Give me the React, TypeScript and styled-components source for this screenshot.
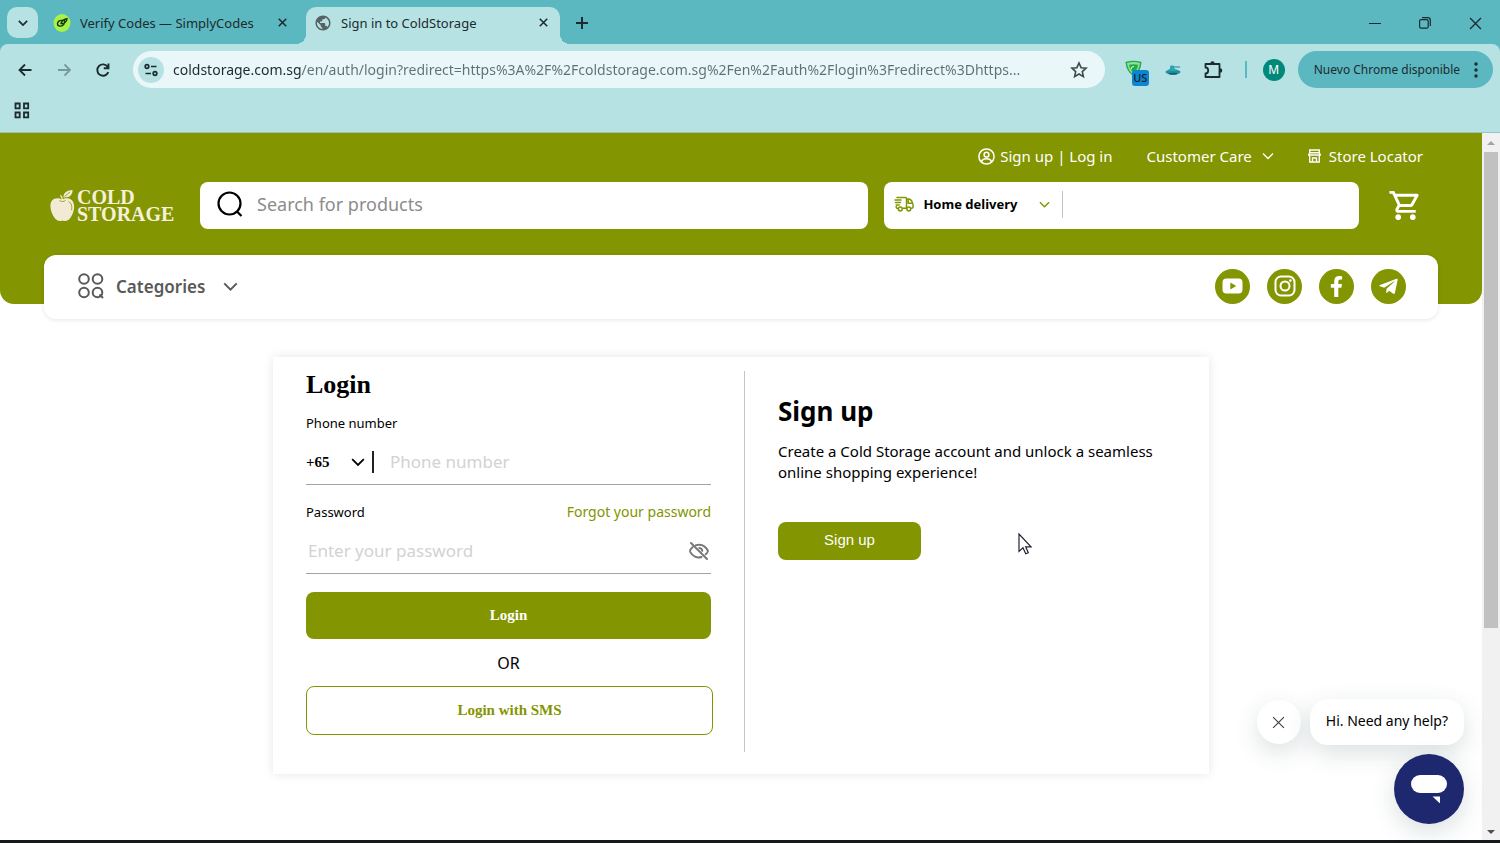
import React from "react";
import styled, { createGlobalStyle, css } from "styled-components";
import { MdOutlineShoppingCart, MdPublic } from "react-icons/md";
import { FaFacebookF, FaTelegramPlane } from "react-icons/fa";

const olive = "#839500";
const teal = "#5bb7c0";
const paleTeal = "#b7e2e4";
const ink = "#1b2b2e";
const sans = `"Noto Sans", sans-serif`;
const serif = `"Liberation Serif", serif`;

const GlobalStyle = createGlobalStyle`
  *, *::before, *::after { box-sizing: border-box; }
  body { margin: 0; background: #fff; font-family: ${sans}; color: #000; }
  button, input, select { font: inherit; color: inherit; margin: 0; padding: 0; border: 0; background: none; outline: 0; }
  button { cursor: pointer; display: flex; align-items: center; justify-content: center; }
  select { appearance: none; }
  a { color: inherit; text-decoration: none; }
  h1, h2, p { margin: 0; }
  svg { display: block; flex: none; }
`;

const Window = styled.div`
  min-height: 100vh;
  display: flex;
  flex-direction: column;
`;

/* ---------- browser frame ---------- */

const TabStrip = styled.div`
  display: flex;
  height: 44px;
  padding: 7px 12px 0 7px;
  background: ${teal};
  color: ${ink};
`;

const TabSearch = styled.button`
  width: 31px;
  height: 31px;
  border-radius: 10px;
  background: ${paleTeal};
`;

const Tab = styled.div<{ $active?: boolean }>`
  position: relative;
  display: flex;
  align-items: center;
  gap: 9px;
  width: ${(p) => (p.$active ? 254 : 253)}px;
  height: 37px;
  margin-left: ${(p) => (p.$active ? 0 : 15)}px;
  padding: ${(p) => (p.$active ? "0 9px 6px 8px" : "0 16px 6px 0")};
  font-size: 13px;
  ${(p) =>
    p.$active &&
    css`
      background: ${paleTeal};
      border-radius: 10px 10px 0 0;
      &::before,
      &::after {
        content: "";
        position: absolute;
        bottom: 0;
        width: 10px;
        height: 10px;
      }
      &::before {
        right: 100%;
        background: radial-gradient(circle at 0 0, transparent 10px, ${paleTeal} 10px);
      }
      &::after {
        left: 100%;
        background: radial-gradient(circle at 100% 0, transparent 10px, ${paleTeal} 10px);
      }
    `}
`;

const TabTitle = styled.span`
  flex: 1;
  white-space: nowrap;
`;

const IconButton = styled.button<{ $size?: number }>`
  width: ${(p) => p.$size ?? 16}px;
  height: ${(p) => p.$size ?? 16}px;
`;

const NewTab = styled(IconButton)`
  margin: 8px 0 0 14px;
`;

const WindowControls = styled.div`
  display: flex;
  gap: 34px;
  margin: 8px 5px 0 auto;
`;

const ToolbarBack = styled.div`
  background: ${teal};
`;

const Toolbar = styled.div`
  background: ${paleTeal};
  border-radius: 8px 8px 0 0;
  border-bottom: 1px solid #9cc3c0;
  color: ${ink};
`;

const AddressRow = styled.div`
  display: flex;
  align-items: center;
  padding: 7px 7px 0 15px;
`;

const NavButtons = styled.div`
  display: flex;
  gap: 19px;
`;

const AddressBar = styled.div`
  flex: 1;
  display: flex;
  align-items: center;
  height: 37px;
  margin-left: 20px;
  padding: 0 16px 0 5px;
  border-radius: 19px;
  background: #eaf7f8;
`;

const SiteInfo = styled.button`
  width: 26px;
  height: 26px;
  border-radius: 50%;
  background: ${paleTeal};
`;

const Url = styled.input`
  flex: 1;
  min-width: 0;
  height: 24px;
  margin: 0 16px 0 9px;
  font-size: 14px;
  text-overflow: ellipsis;
  background: linear-gradient(90deg, ${ink} 129px, #5d7073 129px);
  background-clip: text;
  -webkit-text-fill-color: transparent;
`;

const Extensions = styled.div`
  display: flex;
  align-items: center;
  gap: 16px;
  margin: 0 13px 0 20px;
`;

const FlagExtension = styled.button`
  position: relative;
  align-items: flex-start;
  justify-content: flex-start;
  width: 24px;
  height: 20px;
`;

const CountryBadge = styled.span`
  position: absolute;
  right: 0;
  bottom: -6px;
  width: 17px;
  height: 16px;
  border-radius: 3px;
  background: #0d86cf;
  color: #10202c;
  font-size: 11px;
  font-weight: 500;
  line-height: 16px;
  text-align: center;
`;

const Separator = styled.span`
  width: 2px;
  height: 17px;
  background: ${teal};
`;

const Avatar = styled.button`
  width: 22px;
  height: 22px;
  border-radius: 50%;
  background: #00897b;
  color: #fff;
  font-size: 12px;
`;

const UpdateButton = styled.button`
  gap: 14px;
  height: 37px;
  padding: 0 15px 0 16px;
  border-radius: 19px;
  background: ${teal};
  font-size: 12px;
  white-space: nowrap;
`;

const BookmarkRow = styled.div`
  display: flex;
  align-items: center;
  height: 44px;
  padding-left: 14px;
`;

/* ---------- page ---------- */

const Viewport = styled.div`
  flex: 1;
  display: flex;
  border-bottom: 3px solid #16191a;
`;

const Page = styled.div`
  position: relative;
  flex: 1;
  min-width: 0;
`;

const ScrollTrack = styled.div`
  display: flex;
  flex-direction: column;
  align-items: center;
  width: 18px;
  padding: 7px 0 5px;
  background: #f1f1f1;
`;

const ScrollRail = styled.div`
  flex: 1;
  width: 14px;
  margin: 6px 0;
`;

const ScrollThumb = styled.div`
  height: 71%;
  background: #c1c1c1;
`;

const Header = styled.header`
  padding: 11px 59px 75px 50px;
  border-radius: 0 0 14px 14px;
  background: ${olive};
`;

const TopLinks = styled.nav`
  display: flex;
  justify-content: flex-end;
  align-items: center;
  gap: 34px;
  height: 24px;
  color: #fff;
  font-size: 15px;
`;

const TopLink = styled.a<{ $gap?: number }>`
  display: flex;
  align-items: center;
  gap: ${(p) => p.$gap ?? 8}px;
`;

const SearchRow = styled.div`
  display: flex;
  align-items: center;
  height: 47px;
  margin-top: 14px;
`;

const Logo = styled.a`
  display: flex;
  align-items: center;
  gap: 2px;
  width: 129px;
  color: #f6efdc;
  font-family: ${serif};
  font-size: 20px;
  font-weight: 700;
  line-height: 17px;
`;

const LogoName = styled.span`
  display: flex;
  flex-direction: column;
`;

const SearchBox = styled.label`
  flex: 7;
  display: flex;
  align-items: center;
  gap: 13px;
  height: 47px;
  margin-left: 21px;
  padding: 0 16px 3px;
  border-radius: 8px;
  background: #fff;
`;

const SearchInput = styled.input`
  flex: 1;
  min-width: 0;
  height: 30px;
  font-size: 18px;
  &::placeholder {
    color: #8c8c8c;
  }
`;

const DeliveryBox = styled.div`
  flex: 5;
  display: flex;
  align-items: center;
  height: 47px;
  margin: 0 29px 0 16px;
  padding: 0 10px 3px;
  border-radius: 8px;
  background: #fff;
`;

const DeliverySelect = styled.select`
  width: 116px;
  margin-left: 9px;
  font-size: 13px;
  font-weight: 700;
`;

const DeliveryDivider = styled.span`
  width: 1px;
  height: 27px;
  margin-left: 12px;
  background: #c4c4c4;
`;

const CategoryBar = styled.nav`
  display: flex;
  align-items: center;
  height: 64px;
  margin: -49px 44px 0;
  padding: 0 32px 2px 34px;
  border-radius: 12px;
  background: #fff;
  box-shadow: 0 1px 4px rgba(0, 0, 0, 0.1);
`;

const CategoryButton = styled.button`
  gap: 12px;
  color: #595959;
  font-size: 17px;
  font-weight: 600;
`;

const CategoryLabel = styled.span`
  margin-right: 6px;
`;

const Socials = styled.div`
  display: flex;
  gap: 17px;
  margin-left: auto;
`;

const SocialLink = styled.a`
  display: flex;
  align-items: center;
  justify-content: center;
  width: 35px;
  height: 35px;
  border-radius: 50%;
  background: ${olive};
  color: #fff;
`;

const AuthCard = styled.main`
  display: grid;
  grid-template-columns: 59fr 58fr;
  max-width: 936px;
  margin: 38px auto 0;
  padding: 14px 0 22px;
  background: #fff;
  box-shadow: 0 0 10px rgba(0, 0, 0, 0.1);
`;

const LoginForm = styled.form`
  display: flex;
  flex-direction: column;
  padding: 0 33px 17px;
  border-right: 1px solid #c4c4c4;
`;

const LoginTitle = styled.h1`
  font-family: ${serif};
  font-size: 26px;
  line-height: 28px;
`;

const LabelRow = styled.div`
  display: flex;
  justify-content: space-between;
  margin-top: 14px;
  font-size: 13px;
  line-height: 20px;
`;

const ForgotLink = styled.a`
  color: ${olive};
  font-size: 14px;
`;

const FieldRow = styled.div`
  display: flex;
  align-items: center;
  height: 52px;
  margin-bottom: 3px;
  padding-top: 6px;
  border-bottom: 1px solid #a3a3a3;
`;

const CodeSelect = styled.select`
  width: 45px;
  font-family: ${serif};
  font-size: 15px;
  font-weight: 700;
`;

const CodeDivider = styled.span`
  width: 2px;
  height: 22px;
  margin: 0 16px 0 7px;
  background: #222;
`;

const FieldInput = styled.input`
  flex: 1;
  min-width: 0;
  height: 28px;
  font-size: 17px;
  &::placeholder {
    color: #d2d2d2;
  }
`;

const PasswordInput = styled(FieldInput)`
  padding-left: 2px;
`;

const FormButton = styled.button<{ $outline?: boolean }>`
  height: ${(p) => (p.$outline ? 49 : 47)}px;
  border-radius: 8px;
  background: ${(p) => (p.$outline ? "#fff" : olive)};
  color: ${(p) => (p.$outline ? olive : "#fff")};
  border: ${(p) => (p.$outline ? `1px solid ${olive}` : "0")};
  margin-top: ${(p) => (p.$outline ? 0 : 15)}px;
  margin-right: ${(p) => (p.$outline ? -2 : 0)}px;
  font-family: ${serif};
  font-size: 15px;
  font-weight: 700;
`;

const OrText = styled.p`
  margin: 12px 0 11px;
  font-size: 16px;
  line-height: 24px;
  text-align: center;
`;

const SignupPane = styled.section`
  padding: 22px 33px 0;
`;

const SignupTitle = styled.h2`
  font-size: 26px;
  line-height: 36px;
`;

const SignupText = styled.p`
  margin: 12px 0 39px;
  font-size: 15px;
  line-height: 21px;
`;

const SignupButton = styled.button`
  width: 143px;
  height: 38px;
  padding-bottom: 3px;
  border-radius: 8px;
  background: ${olive};
  color: #fff;
  font-family: "Liberation Sans", sans-serif;
  font-size: 15px;
`;

const Pointer = styled.svg`
  position: absolute;
  left: 1018px;
  top: 400px;
`;

const ChatWidget = styled.aside`
  position: absolute;
  right: 18px;
  bottom: 16px;
  display: flex;
  flex-direction: column;
  align-items: flex-end;
  gap: 9px;
`;

const ChatPrompt = styled.div`
  display: flex;
  align-items: center;
  gap: 9px;
`;

const chatShadow = css`
  box-shadow: 0 8px 24px rgba(30, 60, 70, 0.16);
`;

const ChatClose = styled.button`
  width: 44px;
  height: 44px;
  border-radius: 50%;
  background: #fff;
  color: #444;
  ${chatShadow}
`;

const ChatBubble = styled.button`
  height: 46px;
  padding: 0 16px 3px;
  border-radius: 18px;
  background: #fff;
  font-size: 14px;
  ${chatShadow}
`;

const ChatLauncher = styled.button`
  width: 70px;
  height: 70px;
  border-radius: 50%;
  background: #1d286e;
  ${chatShadow}
`;

/* ---------- drawings ---------- */

const Chevron = ({ w, stroke = 2 }: { w: number; stroke?: number }) => (
  <svg width={w} height={w} viewBox="0 0 12 12" fill="none" stroke="currentColor" strokeWidth={stroke} aria-hidden>
    <path d="M1 3.5 6 8.5l5-5" />
  </svg>
);

const Cross = ({ size, stroke = 2 }: { size: number; stroke?: number }) => (
  <svg width={size} height={size} viewBox="0 0 12 12" fill="none" stroke="currentColor" strokeWidth={stroke} aria-hidden>
    <path d="m1 1 10 10M11 1 1 11" />
  </svg>
);

const SimplyCodesIcon = () => (
  <svg width="18" height="20" viewBox="0 0 18 20" aria-hidden>
    <ellipse cx="9" cy="10" rx="8.500" ry="9" fill="#a6f34a" />
    <path d="M9.500 7.500c-3-.6-5 1-5 3.200 0 2.800 4.500 3.400 6.500.5 1-1.500.8-2.800.4-3.500M8 10.500c.4-2.500 2.500-4 6-4.800-.2 2.300-1.600 4-4 4.800z" fill="none" stroke="#17340f" strokeWidth="1.400" />
  </svg>
);

const Arrow = ({ flip }: { flip?: boolean }) => (
  <svg width="20" height="20" viewBox="0 0 20 20" fill="none" stroke="currentColor" strokeWidth="1.800" opacity={flip ? 0.4 : 1} aria-hidden>
    <path d={flip ? "M4 10h12M10.500 4.500 16 10l-5.500 5.500" : "M16.500 10h-12M10 4.500 4.500 10l5.500 5.500"} />
  </svg>
);

const Reload = () => (
  <svg width="20" height="20" viewBox="0 0 20 20" fill="none" stroke="currentColor" strokeWidth="1.900" aria-hidden>
    <path d="M15.300 12.200A5.700 5.700 0 1 1 14.800 7M15.500 3.500v4.700h-4.700" />
  </svg>
);

const Tune = () => (
  <svg width="16" height="16" viewBox="0 0 16 16" fill="none" stroke="currentColor" strokeWidth="1.700" aria-hidden>
    <circle cx="4" cy="4.500" r="1.800" />
    <path d="M8 4.500h5.500M2.500 11.500H8" />
    <circle cx="12" cy="11.500" r="1.800" />
  </svg>
);

const Star = () => (
  <svg width="18" height="18" viewBox="0 0 18 18" fill="none" stroke="#3c4a4c" strokeWidth="1.600" aria-hidden>
    <path d="m9 2 2.100 4.700 5 .5-3.800 3.400 1.100 5L9 13l-4.400 2.600 1.100-5L1.900 7.200l5-.5z" />
  </svg>
);

const Shield = () => (
  <svg width="17" height="17" viewBox="0 0 17 17" aria-hidden>
    <path d="M1.200 2.500c4.600-1.400 10-1.400 14.600 0-.4 5.500-2.800 10-7.300 13C4.300 12.500 1.700 8 1.200 2.500z" fill="#8fdfa0" stroke="#22ab45" strokeWidth="1.400" />
    <path d="M4 4.800c3-.8 6-.8 9 0-.3 3.200-1.500 5.800-4.500 8-2.600-2-4-4.800-4.500-8z" fill="#22ab45" />
    <path d="M6 9.500c0-1.800 1.200-3 3-3" stroke="#d8f5dc" strokeWidth="1.200" fill="none" />
  </svg>
);

const Ufo = () => (
  <svg width="16" height="16" viewBox="0 0 16 16" aria-hidden>
    <ellipse cx="8" cy="10" rx="7.500" ry="2.500" fill="#1f8fa0" />
    <path d="M3 9c0-1.500 1-2 2-2V4.500C5 3 9.500 3 9.500 4.500V7c2 0 3 .7 3 2z" fill="#2ca3b2" />
    <path d="M9.500 5H15" stroke="#3f8b97" strokeWidth="1.200" />
    <ellipse cx="8" cy="11.800" rx="4.500" ry="1" fill="#14606f" />
  </svg>
);

const Puzzle = () => (
  <svg width="20" height="20" viewBox="0 0 20 20" aria-hidden>
    <path d="M2.500 4h14v13h-14v-3.500c1.600 0 2.700-1.200 2.700-3s-1.100-3-2.700-3z" fill="none" stroke="currentColor" strokeWidth="1.800" strokeLinejoin="round" />
    <path d="M7.300 3.500a2.200 2.200 0 0 1 4.400 0zM17 8.200a2.300 2.300 0 0 1 0 4.600z" fill="currentColor" />
  </svg>
);

const Dots = () => (
  <svg width="4" height="16" viewBox="0 0 4 16" fill="currentColor" aria-hidden>
    <circle cx="2" cy="2" r="1.700" />
    <circle cx="2" cy="8" r="1.700" />
    <circle cx="2" cy="14" r="1.700" />
  </svg>
);

const AppGrid = () => (
  <svg width="16" height="17" viewBox="0 0 16 17" fill="none" stroke="currentColor" strokeWidth="1.800" aria-hidden>
    <path d="M1.500 1.500h4.200v4.800H1.500zM10 1.500h4.200v4.800H10zM1.500 10.500h4.200v4.800H1.500zM10 10.500h4.200v4.800H10z" />
  </svg>
);

const UserCircle = () => (
  <svg width="17" height="17" viewBox="0 0 17 17" fill="none" stroke="currentColor" strokeWidth="1.500" aria-hidden>
    <circle cx="8.500" cy="8.500" r="7.600" />
    <circle cx="8.500" cy="6.700" r="2.400" />
    <path d="M3.500 13.800c.6-2.200 2.600-3 5-3s4.400.8 5 3" />
  </svg>
);

const Store = () => (
  <svg width="13" height="14" viewBox="0 0 13 14" fill="none" stroke="currentColor" strokeWidth="1.400" aria-hidden>
    <path d="M1.700 1h9.600v2.800l1 2.200H.7l1-2.200zM1.700 6v7h9.600V6M4.500 13V9h4v4M1.500 3.800h10" />
  </svg>
);

const Apple = () => (
  <svg width="25" height="32" viewBox="0 0 25 32" aria-hidden>
    <path d="M12 9.500c3-1.800 7.500-2 10 .8 3.800 4.500 2 12.500-1.500 17.500-2.300 3.200-5.400 3.900-8 2.700-2.600 1.200-5.700.5-8-2.700C1 23-1.300 15 2 10.500 4.500 7.500 9 7.700 12 9.500z" fill="#f3ead6" />
    <path d="M12.500 11c0-2.500-.6-4.200-2-5.700" fill="none" stroke="#f3ead6" strokeWidth="1.300" />
    <path d="M9.500 10.500c1.500 1.300 4.500 1.300 6 0M18.500 11.500c3 1.600 3.800 5 3 8.500" fill="none" stroke={olive} strokeWidth=".8" />
    <path d="M13.500 7.500C13 3.500 16 .5 22.500 0c.3 4-2.500 8-9 7.500z" fill="#f3ead6" />
    <path d="M14.500 6.500 20 2" stroke={olive} strokeWidth=".8" />
  </svg>
);

const Search = () => (
  <svg width="28" height="28" viewBox="0 0 28 28" fill="none" stroke="#000" strokeWidth="2.200" aria-hidden>
    <circle cx="13.500" cy="13.500" r="11" />
    <path d="m20.500 21 5 5" />
  </svg>
);

const Truck = () => (
  <svg width="20" height="16" viewBox="0 0 20 16" fill="none" stroke={olive} strokeWidth="1.500" strokeLinecap="round" strokeLinejoin="round" aria-hidden>
    <path d="M3 1.500h8.500c.6 0 1 .4 1 1v9.700H9M12.500 3h2.200c1.800 0 2.900 1.500 3.600 3.200.6 1.300.8 2.600.8 4 0 1.300-.4 2-1.600 2M14.200 3.300v3.900h4.300M3.800 12.500c-1 0-1.600-.8-1.600-2M1 4h6M1.500 6.500h5M2.200 9h3" />
    <circle cx="6.300" cy="13" r="1.900" />
    <circle cx="14.800" cy="13" r="1.900" />
  </svg>
);

const CategoriesIcon = () => (
  <svg width="26" height="26" viewBox="0 0 26 26" fill="none" stroke="currentColor" strokeWidth="2" aria-hidden>
    <circle cx="6" cy="6" r="4.800" />
    <circle cx="19.500" cy="6" r="4.800" />
    <circle cx="6" cy="19.500" r="4.800" />
    <circle cx="19.500" cy="19.500" r="4.800" />
    <path d="m21.500 21.500 3.500 3.500" />
  </svg>
);

const YouTube = () => (
  <svg width="21" height="16" viewBox="0 0 21 16" aria-hidden>
    <rect x=".5" y=".5" width="20" height="15" rx="4" fill="#fff" />
    <path d="m8.300 4.500 6 3.500-6 3.500z" fill={olive} />
  </svg>
);

const Instagram = () => (
  <svg width="22" height="22" viewBox="0 0 22 22" fill="none" stroke="#fff" strokeWidth="2" aria-hidden>
    <rect x="1.500" y="1.500" width="19" height="19" rx="5.500" />
    <circle cx="11" cy="11" r="4.500" />
    <circle cx="16.400" cy="5.600" r="1.300" fill="#fff" stroke="none" />
  </svg>
);

const EyeOff = () => (
  <svg width="20" height="18" viewBox="0 0 20 18" fill="none" stroke="#777" strokeWidth="1.900" strokeLinecap="round" aria-hidden>
    <path d="M2 1l16 16M7 3.200c5.500-1.500 9.800 1.300 12 5.800-.5 1.200-1.300 2.400-2.300 3.300M3.500 5.200C1.500 7 .6 8.500 1.200 9.800c2.200 4.500 6.800 6.800 11.300 5.200M10.300 6c1.700.2 2.800 1.200 3 2.800" />
  </svg>
);

const Triangle = ({ down }: { down?: boolean }) => (
  <svg width="8" height="6" viewBox="0 0 8 6" fill={down ? "#505050" : "#a3a3a3"} aria-hidden>
    <path d={down ? "M0 1h8L4 5z" : "M0 5h8L4 1z"} />
  </svg>
);

const url =
  "coldstorage.com.sg/en/auth/login?redirect=https%3A%2F%2Fcoldstorage.com.sg%2Fen%2Fauth%2Flogin%3Fredirect%3Dhttps...";

export default function App() {
  return (
    <Window>
      <GlobalStyle />
      <TabStrip>
        <TabSearch aria-label="Search tabs"><Chevron w={10} /></TabSearch>
        <Tab>
          <SimplyCodesIcon />
          <TabTitle>Verify Codes — SimplyCodes</TabTitle>
          <IconButton aria-label="Close tab"><Cross size={9} /></IconButton>
        </Tab>
        <Tab $active>
          <MdPublic size={18} color="#566264" />
          <TabTitle>Sign in to ColdStorage</TabTitle>
          <IconButton aria-label="Close tab"><Cross size={9} /></IconButton>
        </Tab>
        <NewTab aria-label="New tab">
          <svg width="12" height="12" viewBox="0 0 12 12" stroke="currentColor" strokeWidth="2" aria-hidden>
            <path d="M6 0v12M0 6h12" />
          </svg>
        </NewTab>
        <WindowControls>
          <IconButton aria-label="Minimise">
            <svg width="12" height="12" viewBox="0 0 12 12" stroke="currentColor" aria-hidden><path d="M0 6.500h12" /></svg>
          </IconButton>
          <IconButton aria-label="Restore">
            <svg width="12" height="12" viewBox="0 0 12 12" fill="none" stroke="currentColor" strokeWidth="1.200" aria-hidden>
              <rect x=".6" y="2.600" width="8.600" height="8.600" rx="1.500" />
              <path d="M3 .7h5.800a2.500 2.500 0 0 1 2.500 2.500V9" />
            </svg>
          </IconButton>
          <IconButton aria-label="Close"><Cross size={13} stroke={1.2} /></IconButton>
        </WindowControls>
      </TabStrip>

      <ToolbarBack>
        <Toolbar>
          <AddressRow>
            <NavButtons>
              <IconButton $size={20} aria-label="Back"><Arrow /></IconButton>
              <IconButton $size={20} aria-label="Forward"><Arrow flip /></IconButton>
              <IconButton $size={20} aria-label="Reload"><Reload /></IconButton>
            </NavButtons>
            <AddressBar>
              <SiteInfo aria-label="Site information"><Tune /></SiteInfo>
              <Url aria-label="Address" defaultValue={url} />
              <IconButton $size={20} aria-label="Bookmark"><Star /></IconButton>
            </AddressBar>
            <Extensions>
              <FlagExtension aria-label="Price extension">
                <Shield />
                <CountryBadge>US</CountryBadge>
              </FlagExtension>
              <IconButton aria-label="Rewards extension"><Ufo /></IconButton>
              <IconButton $size={32} aria-label="Extensions"><Puzzle /></IconButton>
              <Separator />
              <Avatar aria-label="Profile">M</Avatar>
            </Extensions>
            <UpdateButton>Nuevo Chrome disponible<Dots /></UpdateButton>
          </AddressRow>
          <BookmarkRow>
            <IconButton aria-label="Apps"><AppGrid /></IconButton>
          </BookmarkRow>
        </Toolbar>
      </ToolbarBack>

      <Viewport>
        <Page>
          <Header>
            <TopLinks>
              <TopLink href="#account" $gap={5}><UserCircle />Sign up | Log in</TopLink>
              <TopLink href="#care" $gap={10}>Customer Care<Chevron w={12} stroke={1.3} /></TopLink>
              <TopLink href="#stores"><Store />Store Locator</TopLink>
            </TopLinks>
            <SearchRow>
              <Logo href="#home"><Apple /><LogoName><span>COLD</span><span>STORAGE</span></LogoName></Logo>
              <SearchBox>
                <Search />
                <SearchInput type="text" aria-label="Search for products" placeholder="Search for products" />
              </SearchBox>
              <DeliveryBox>
                <Truck />
                <DeliverySelect aria-label="Delivery method"><option>Home delivery</option></DeliverySelect>
                <svg width="11" height="11" viewBox="0 0 12 12" fill="none" stroke={olive} strokeWidth="1.500" aria-hidden>
                  <path d="M1 3.500 6 8.500l5-5" />
                </svg>
                <DeliveryDivider />
              </DeliveryBox>
              <IconButton as="a" href="#cart" $size={35} aria-label="Cart">
                <MdOutlineShoppingCart size={35} color="#fff" />
              </IconButton>
            </SearchRow>
          </Header>

          <CategoryBar>
            <CategoryButton>
              <CategoriesIcon />
              <CategoryLabel>Categories</CategoryLabel>
              <Chevron w={15} stroke={1.6} />
            </CategoryButton>
            <Socials>
              <SocialLink href="#youtube" aria-label="YouTube"><YouTube /></SocialLink>
              <SocialLink href="#instagram" aria-label="Instagram"><Instagram /></SocialLink>
              <SocialLink href="#facebook" aria-label="Facebook"><FaFacebookF size={21} /></SocialLink>
              <SocialLink href="#telegram" aria-label="Telegram"><FaTelegramPlane size={21} /></SocialLink>
            </Socials>
          </CategoryBar>

          <AuthCard>
            <LoginForm onSubmit={(e) => e.preventDefault()}>
              <LoginTitle>Login</LoginTitle>
              <LabelRow><label htmlFor="phone">Phone number</label></LabelRow>
              <FieldRow>
                <CodeSelect aria-label="Country code"><option>+65</option></CodeSelect>
                <Chevron w={14} stroke={1.5} />
                <CodeDivider />
                <FieldInput id="phone" type="tel" placeholder="Phone number" />
              </FieldRow>
              <LabelRow>
                <label htmlFor="password">Password</label>
                <ForgotLink href="#forgot">Forgot your password</ForgotLink>
              </LabelRow>
              <FieldRow>
                <PasswordInput id="password" type="password" placeholder="Enter your password" />
                <IconButton type="button" $size={24} aria-label="Show password"><EyeOff /></IconButton>
              </FieldRow>
              <FormButton type="submit">Login</FormButton>
              <OrText>OR</OrText>
              <FormButton type="button" $outline>Login with SMS</FormButton>
            </LoginForm>
            <SignupPane>
              <SignupTitle>Sign up</SignupTitle>
              <SignupText>Create a Cold Storage account and unlock a seamless online shopping experience!</SignupText>
              <SignupButton>Sign up</SignupButton>
            </SignupPane>
          </AuthCard>

          <Pointer width="14" height="22" viewBox="0 0 14 22" aria-hidden>
            <path d="M1 1v17.500l4-3.700 2.700 6 2.600-1.100-2.600-5.900H13z" fill="#fff" stroke="#222433" strokeWidth="1.200" />
          </Pointer>

          <ChatWidget>
            <ChatPrompt>
              <ChatClose aria-label="Close message"><Cross size={13} stroke={1.1} /></ChatClose>
              <ChatBubble>Hi. Need any help?</ChatBubble>
            </ChatPrompt>
            <ChatLauncher aria-label="Open chat">
              <svg width="36" height="28" viewBox="0 0 36 28" fill="#fff" aria-hidden>
                <rect width="36" height="18" rx="9" />
                <path d="M21.500 21.500h7.500v7z" />
              </svg>
            </ChatLauncher>
          </ChatWidget>
        </Page>
        <ScrollTrack>
          <Triangle />
          <ScrollRail><ScrollThumb /></ScrollRail>
          <Triangle down />
        </ScrollTrack>
      </Viewport>
    </Window>
  );
}
